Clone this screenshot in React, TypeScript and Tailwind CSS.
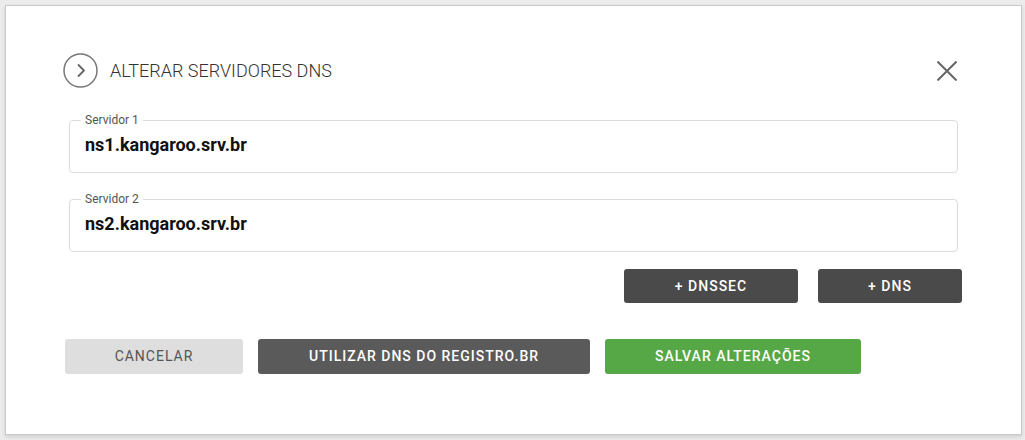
import React from "react";

interface ServerField {
  label: string;
  value: string;
}

const servers: ServerField[] = [
  { label: "Servidor 1", value: "ns1.kangaroo.srv.br" },
  { label: "Servidor 2", value: "ns2.kangaroo.srv.br" },
];

const Field: React.FC<ServerField> = ({ label, value }) => (
  <fieldset className="ml-[63px] w-[889px] h-[60px] rounded-[4px] border border-[#dcdcdc] px-[15px] pt-[6px]">
    <legend className="ml-[-4px] px-[4px] text-[12px] leading-[14px] text-[#555]">
      {label}
    </legend>
    <p className="text-[18px] font-bold leading-[24px] text-[#111]">{value}</p>
  </fieldset>
);

export default function App() {
  return (
    <div
      className="w-[1025px] h-[440px] bg-[#ececec] pt-[5px] pl-[5px]"
      style={{ fontFamily: "Roboto, 'Liberation Sans', sans-serif" }}
    >
      <div className="w-[1017px] h-[430px] bg-white border border-[#c9c9c9] shadow-[0_2px_4px_rgba(0,0,0,0.12)]">
        {/* header */}
        <div className="flex items-center justify-between pt-[47px] pl-[57px] pr-[64px]">
          <div className="flex items-center gap-[12px]">
            <svg width="35" height="35" viewBox="0 0 35 35">
              <circle cx="17.5" cy="17.5" r="16.5" fill="none" stroke="#777" strokeWidth="1.5" />
              <path d="M15.5 12 L21 17.5 L15.5 23" fill="none" stroke="#666" strokeWidth="1.8" strokeLinecap="round" strokeLinejoin="round" />
            </svg>
            <h2 className="text-[18px] font-light text-[#333]">ALTERAR SERVIDORES DNS</h2>
          </div>
          <svg width="20" height="20" viewBox="0 0 20 20">
            <path d="M0.5 0.5 L19.5 19.5 M19.5 0.5 L0.5 19.5" stroke="#666" strokeWidth="2" />
          </svg>
        </div>

        {/* fields */}
        <div className="mt-[25px] flex flex-col gap-[19px]">
          {servers.map((s) => (
            <Field key={s.label} label={s.label} value={s.value} />
          ))}
        </div>

        {/* dns buttons */}
        <div className="mt-[17px] flex justify-end gap-[20px] pr-[59px]">
          <button className="w-[174px] h-[34px] rounded-[3px] bg-[#4a4a4a] text-white text-[14px] font-medium tracking-[1px]">
            + DNSSEC
          </button>
          <button className="w-[144px] h-[34px] rounded-[3px] bg-[#4a4a4a] text-white text-[14px] font-medium tracking-[1px]">
            + DNS
          </button>
        </div>

        {/* actions */}
        <div className="mt-[36px] flex gap-[15px] pl-[59px]">
          <button className="w-[178px] h-[35px] rounded-[3px] bg-[#dedede] text-[#555] text-[14px] tracking-[1px]">
            CANCELAR
          </button>
          <button className="w-[332px] h-[35px] rounded-[3px] bg-[#5a5a5a] text-white text-[14px] font-medium tracking-[1px]">
            UTILIZAR DNS DO REGISTRO.BR
          </button>
          <button className="w-[256px] h-[35px] rounded-[3px] bg-[#56a846] text-white text-[14px] font-medium tracking-[1px]">
            SALVAR ALTERAÇÕES
          </button>
        </div>
      </div>
    </div>
  );
}
